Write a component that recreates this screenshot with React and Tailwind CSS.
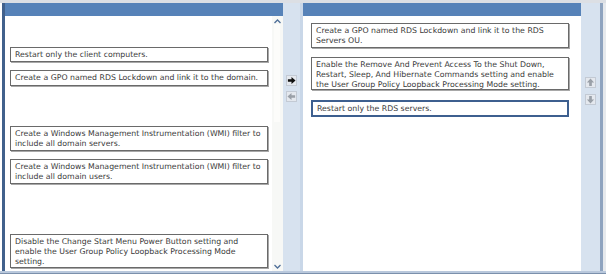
import React from 'react';

const font = { fontFamily: '"DejaVu Sans", Verdana, sans-serif' };

function Item({ lines, mt, h, selected, ml }) {
  return (
    <div
      className={`w-[258px] pl-[4px] pt-[2px] text-[7.8px] leading-[10px] text-[#3a3a3a] bg-white whitespace-nowrap overflow-hidden ${selected ? 'border-2 border-[#3d5f8f]' : 'border border-[#6a6a6a] shadow-[1px_1px_0_#a8a8a8]'}`}
      style={{ marginTop: mt, height: h, marginLeft: ml }}
    >
      {lines.map((l, i) => <div key={i}>{l}</div>)}
    </div>
  );
}

function Arrow({ dir, dark }) {
  const rot = { right: 0, left: 180, up: 270, down: 90 }[dir];
  return (
    <div className="w-[11px] h-[11px] bg-[#e4e8ee] border border-[#c3cad4] flex items-center justify-center">
      <svg width="9" height="9" viewBox="0 0 10 10" style={{ transform: `rotate(${rot}deg)` }}>
        <path d="M1 3.5h4V1l4.5 4L5 9V6.5H1z" fill={dark ? '#111' : '#9aa0a8'} />
      </svg>
    </div>
  );
}

const left = [
  { lines: ['Restart only the client computers.'], mt: 31, h: 15 },
  { lines: ['Create a GPO named RDS Lockdown and link it to the domain.'], mt: 8, h: 16 },
  { lines: ['Create a Windows Management Instrumentation (WMI) filter to', 'include all domain servers.'], mt: 40, h: 25 },
  { lines: ['Create a Windows Management Instrumentation (WMI) filter to', 'include all domain users.'], mt: 8, h: 25 },
  { lines: ['Disable the Change Start Menu Power Button setting and', 'enable the User Group Policy Loopback Processing Mode', 'setting.'], mt: 50, h: 34 },
];

const right = [
  { lines: ['Create a GPO named RDS Lockdown and link it to the RDS', 'Servers OU.'], mt: 7, h: 25 },
  { lines: ['Enable the Remove And Prevent Access To the Shut Down,', 'Restart, Sleep, And Hibernate Commands setting and enable', 'the User Group Policy Loopback Processing Mode setting.'], mt: 9, h: 33 },
  { lines: ['Restart only the RDS servers.'], mt: 10, h: 17, selected: true },
];

export default function App() {
  return (
    <div className="w-[606px] h-[277px] bg-white overflow-hidden" style={font}>
      <div className="h-[3px] bg-[#dcdfe4]" />
      <div className="flex h-[268px] pl-[2px]">
        <div className="w-[3px] bg-[#41618c]" />
        {/* left panel */}
        <div className="w-[278px] flex flex-col">
          <div className="h-[13px] bg-[#5682b8]" />
          <div className="flex-1 flex">
            <div className="flex-1 flex flex-col">
              {left.map((it, i) => <Item key={i} ml={5} {...it} />)}
            </div>
            <div className="w-[11px] bg-[#f7f8f6] flex flex-col items-center relative">
              <div className="absolute left-[2px] top-[8px] w-[6px] h-[98px] bg-[#fcfcfa]" />
              <svg width="7" height="5" viewBox="0 0 7 5" className="mt-[3px] relative">
                <path d="M0.5 4L3.5 1l3 3" stroke="#4f6f98" strokeWidth="1.3" fill="none" />
              </svg>
              <div className="flex-1" />
              <svg width="7" height="5" viewBox="0 0 7 5" className="mb-[2px]">
                <path d="M0.5 1L3.5 4l3-3" stroke="#4f6f98" strokeWidth="1.3" fill="none" />
              </svg>
            </div>
          </div>
        </div>
        {/* middle buttons */}
        <div className="w-[20px] bg-[#d7e2ef] flex flex-col items-center pt-[72px] gap-[5px] border-r-[3px] border-[#c9d7e8]">
          <Arrow dir="right" dark />
          <Arrow dir="left" />
        </div>
        {/* right panel */}
        <div className="w-[278px] flex flex-col">
          <div className="h-[13px] bg-[#5682b8]" />
          <div className="flex-1 flex flex-col bg-white">
            {right.map((it, i) => <Item key={i} ml={8} {...it} />)}
          </div>
        </div>
        {/* right buttons */}
        <div className="w-[19px] bg-[#d7e2ef] flex flex-col items-center pt-[74px] gap-[6px]">
          <Arrow dir="up" />
          <Arrow dir="down" />
        </div>
        <div className="w-[3px] bg-[#8ea3bf]" />
        <div className="flex-1 bg-[#e6e9ed]" />
      </div>
      <div className="h-[2px] bg-[#b9c8dc]" />
      <div className="h-[1px] bg-[#7b90ac]" />
    </div>
  );
}
